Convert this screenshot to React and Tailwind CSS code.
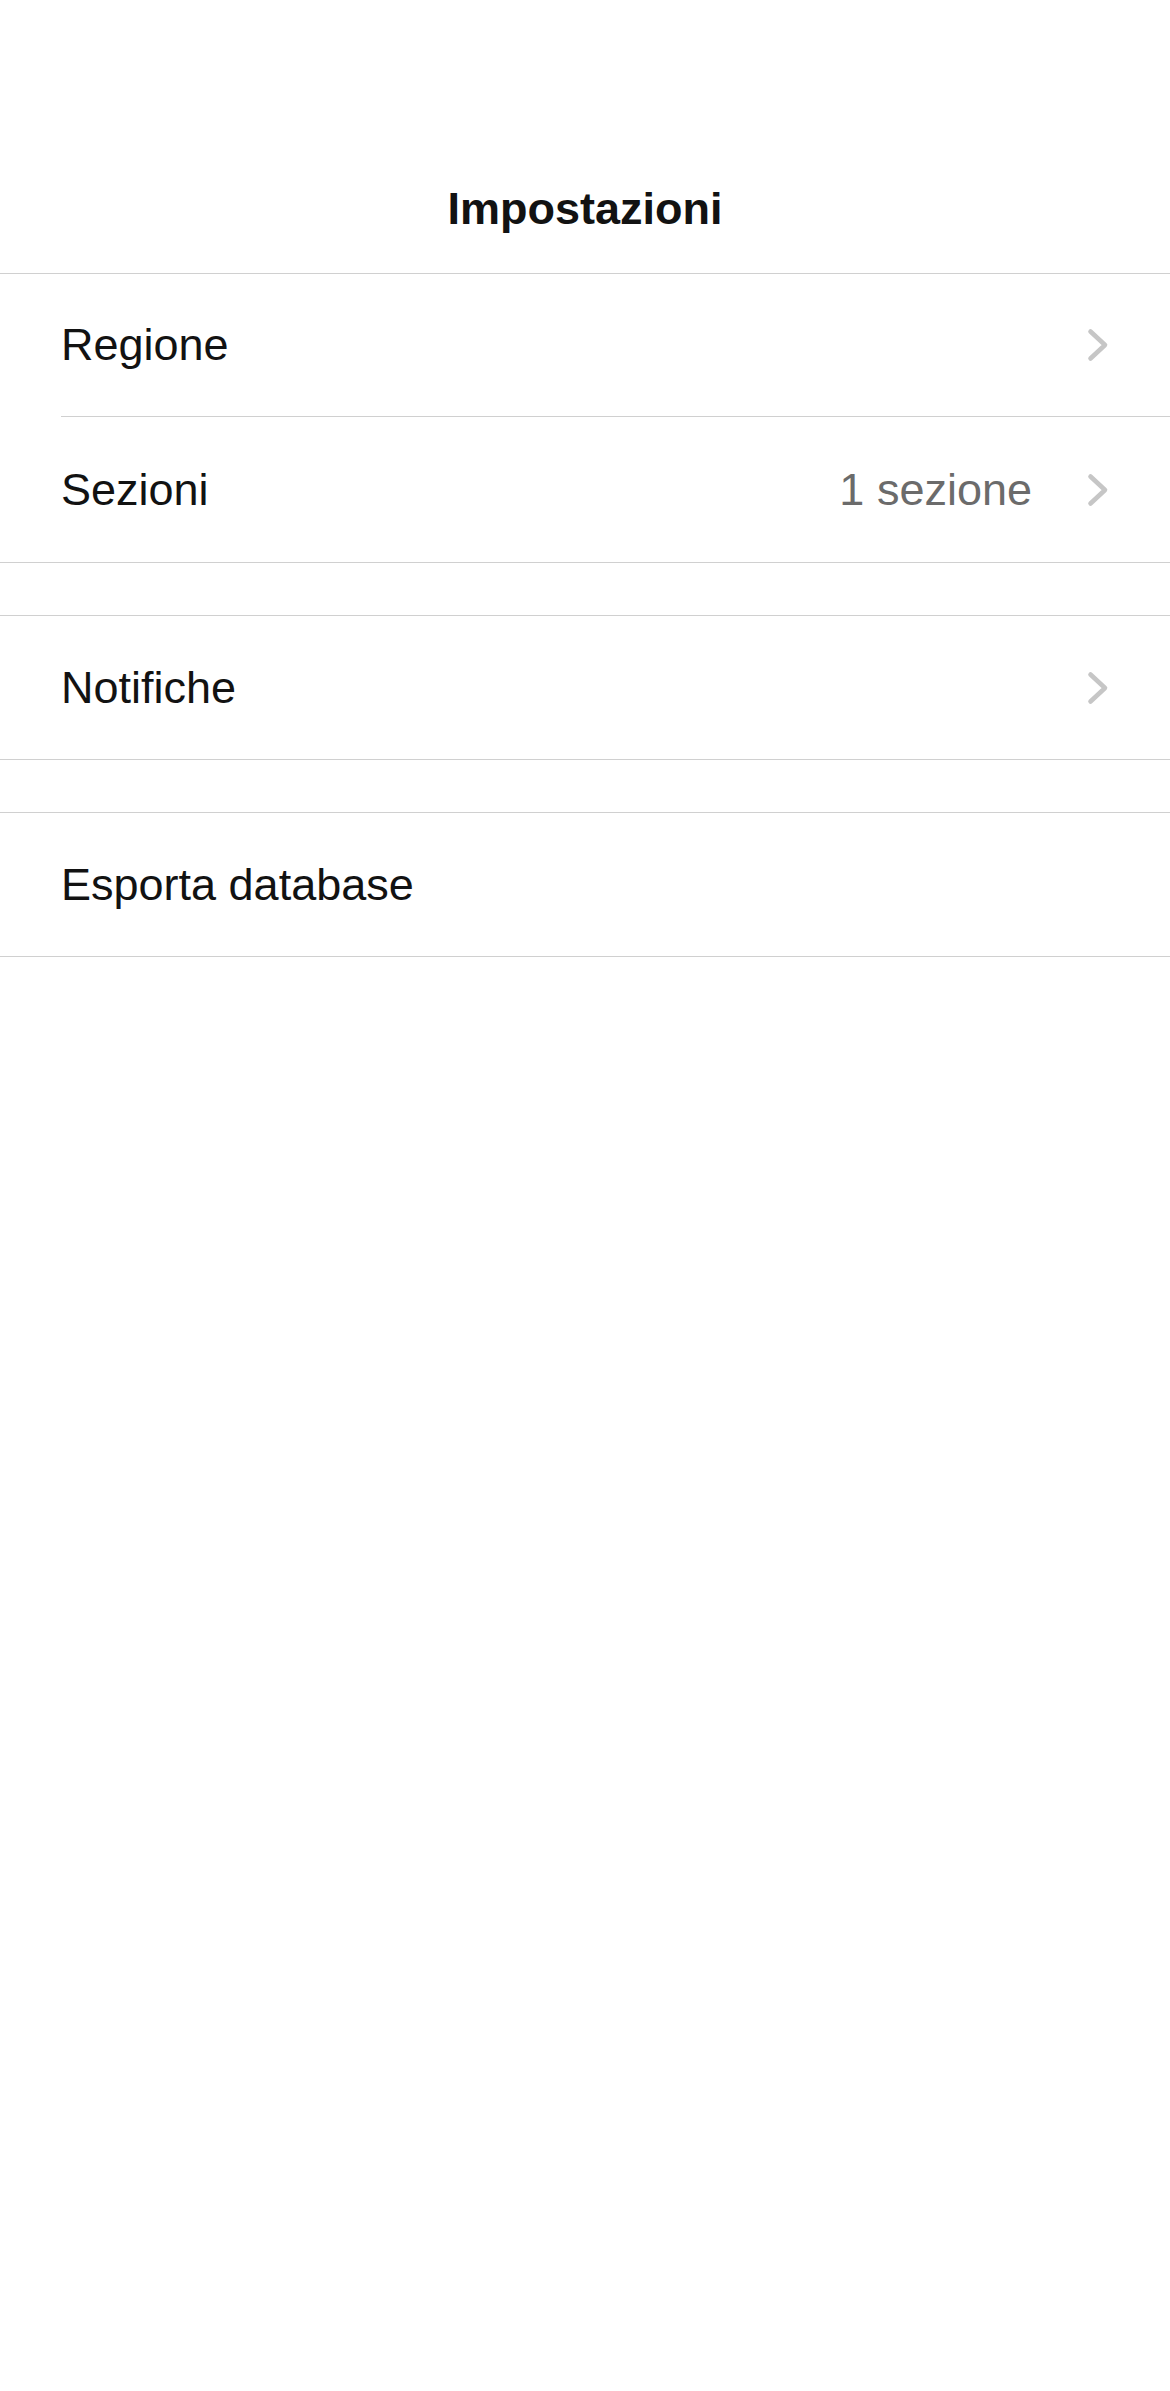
import React from "react";

function Chevron() {
  return (
    <svg width="22" height="34" viewBox="0 0 22 34" fill="none" className="shrink-0">
      <path d="M3.5 3.5 L18 17 L3.5 30.5" stroke="#c6c6c6" strokeWidth="4.6" strokeLinecap="round" strokeLinejoin="round" />
    </svg>
  );
}

function Row({ label, value, chevron, height = "h-[143px]" }) {
  return (
    <div className={`flex items-center ${height} pl-[61px] pr-[61px]`}>
      <span className="flex-1 text-[45px] leading-[54px] text-[#121212]">{label}</span>
      {value && <span className="text-[45px] leading-[54px] text-[#6b6b6b] mr-[55px]">{value}</span>}
      {chevron && <Chevron />}
    </div>
  );
}

export default function App() {
  return (
    <div className="min-h-[2391px] bg-white" style={{ fontFamily: '"Liberation Sans", Arial, sans-serif' }}>
      <div className="h-[274px] border-b border-[#d0d0d0] pt-[182px] text-center">
        <h1 className="text-[45px] leading-[54px] font-bold text-[#121212]">Impostazioni</h1>
      </div>
      <div className="border-b border-[#d0d0d0]">
        <Row label="Regione" chevron height="h-[142px]" />
        <div className="ml-[61px] border-b border-[#d0d0d0]" />
        <Row label="Sezioni" value="1 sezione" chevron height="h-[145px]" />
      </div>
      <div className="h-[52px]" />
      <div className="border-y border-[#d0d0d0]">
        <Row label="Notifiche" chevron />
      </div>
      <div className="h-[52px]" />
      <div className="border-y border-[#d0d0d0]">
        <Row label="Esporta database" />
      </div>
    </div>
  );
}
